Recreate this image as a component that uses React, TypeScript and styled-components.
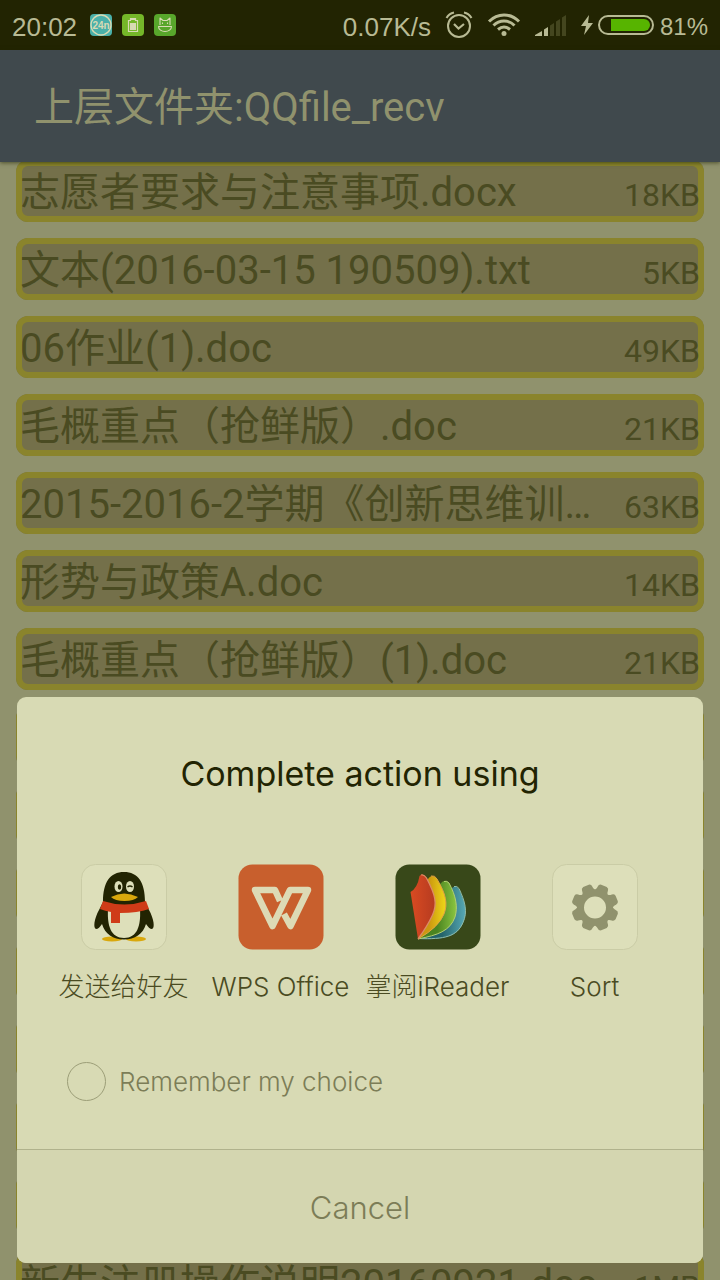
import React from "react";
import styled, { createGlobalStyle } from "styled-components";

const cjk = `"Noto Sans CJK SC", sans-serif`;
const ui = `Inter, ${cjk}`;

const GlobalStyle = createGlobalStyle`
  * { box-sizing: border-box; }
  body { margin: 0; background: #90926d; }
  button, input { font: inherit; margin: 0; }
`;

const Screen = styled.div`
  position: relative;
  display: flex;
  flex-direction: column;
  height: 100vh;
  overflow: hidden;
  background: #90926d;
  font-family: Roboto, ${cjk};
`;

const StatusBar = styled.div`
  display: flex;
  flex: none;
  align-items: center;
  justify-content: space-between;
  height: 50px;
  padding: 0 12px;
  background: #222402;
  color: #b8ba94;
  font-family: "Liberation Sans", sans-serif;
`;

const StatusGroup = styled.div<{ $gap: number }>`
  display: flex;
  align-items: center;
  gap: ${(p) => p.$gap}px;
  svg { display: block; flex: none; }
`;

const StatusText = styled.span<{ $size: number }>`
  font-size: ${(p) => p.$size}px;
  line-height: 32px;
  padding-top: 3px;
`;

const Header = styled.header`
  position: relative;
  z-index: 1;
  display: flex;
  flex: none;
  align-items: center;
  height: 112px;
  padding: 4px 34px 0;
  background: #40494d;
  box-shadow: 0 1px 4px rgba(34, 36, 2, 0.6);
`;

const HeaderTitle = styled.h1`
  margin: 0;
  color: #90926d;
  font-size: 40px;
  font-weight: 400;
  line-height: 56px;
`;

const FileList = styled.ul`
  display: flex;
  flex: 1;
  flex-direction: column;
  gap: 16px;
  margin: -2px 0 0;
  padding: 0 16px;
  list-style: none;
`;

const FileRow = styled.li`
  display: flex;
  flex: none;
  align-items: baseline;
  justify-content: space-between;
  gap: 16px;
  height: 62px;
  padding: 3px 4px 0;
  border-radius: 12px;
  background: #74704a;
  box-shadow: inset 0 0 0 6px #8a842c;
  color: #4a4b22;
  line-height: 60px;
  white-space: nowrap;
`;

const FileName = styled.span`
  min-width: 0;
  overflow: hidden;
  font-size: 40px;
  text-overflow: ellipsis;
`;

const FileSize = styled.span`
  font-size: 32px;
`;

const Sheet = styled.section`
  position: absolute;
  z-index: 2;
  right: 17px;
  bottom: 17px;
  left: 17px;
  overflow: hidden;
  border-radius: 9px;
  background: #d8dab4;
  font-family: ${ui};
`;

const SheetTitle = styled.h2`
  margin: 0;
  padding-top: 53px;
  color: #222402;
  font-size: 34px;
  font-weight: 400;
  line-height: 48px;
  text-align: center;
`;

const AppGrid = styled.div`
  display: grid;
  grid-template-columns: repeat(4, 1fr);
  padding: 66px 30px 0 28px;
`;

const AppButton = styled.button`
  display: flex;
  flex-direction: column;
  align-items: center;
  gap: 21px;
  padding: 0;
  border: 0;
  background: none;
  color: #4a4b22;
  font-size: 26px;
  font-weight: 300;
  line-height: 32px;
  white-space: nowrap;
  svg { display: block; }
`;

const Remember = styled.label`
  display: flex;
  align-items: center;
  gap: 13px;
  padding: 59px 50px 48px;
  color: #7c7d57;
  font-size: 26px;
  font-weight: 300;
  line-height: 39px;
`;

const RoundCheck = styled.input`
  appearance: none;
  width: 39px;
  height: 39px;
  border: 1px solid #9c9e78;
  border-radius: 50%;
  &:checked { background: #9c9e78; }
`;

const CancelButton = styled.button`
  display: block;
  width: 100%;
  padding: 33px 0 31px;
  border: 0;
  border-top: 1px solid #b0b28c;
  background: #d4d6b0;
  color: #7c7d57;
  font-size: 31px;
  font-weight: 300;
  line-height: 49px;
`;

const files = [
  { name: "志愿者要求与注意事项.docx", size: "18KB" },
  { name: "文本(2016-03-15 190509).txt", size: "5KB" },
  { name: "06作业(1).doc", size: "49KB" },
  { name: "毛概重点（抢鲜版）.doc", size: "21KB" },
  { name: "2015-2016-2学期《创新思维训…", size: "63KB" },
  { name: "形势与政策A.doc", size: "14KB" },
  { name: "毛概重点（抢鲜版）(1).doc", size: "21KB" },
  ...Array.from({ length: 7 }, () => ({ name: "", size: "" })),
  { name: "新生注册操作说明20160921.doc", size: "1MB" },
];

const CalendarBadge = () => (
  <svg width="24" height="24" viewBox="0 0 24 24">
    <rect x="1" y="1" width="22" height="22" rx="4" fill="#4ab0aa" />
    <circle cx="12" cy="12" r="10" fill="none" stroke="#d8dab4" strokeWidth="1.4" />
    <text x="12" y="15.5" textAnchor="middle" fontFamily="Liberation Sans" fontWeight="700" fontSize="10" fill="#d8dab4">24n</text>
  </svg>
);

const BatteryBadge = () => (
  <svg width="24" height="24" viewBox="0 0 24 24">
    <rect x="1" y="1" width="22" height="22" rx="4" fill="#75b729" />
    <path d="M9.5 5.5h5v2h2v11h-9v-11h2z" fill="none" stroke="#d8dab4" strokeWidth="1.2" />
    <path d="M9 10h6v7H9zM9 5h6v2H9z" fill="#d8dab4" />
  </svg>
);

const CatBadge = () => (
  <svg width="24" height="24" viewBox="0 0 24 24">
    <rect x="1" y="1" width="22" height="22" rx="4" fill="#58a62b" />
    <g fill="none" stroke="#d8dab4" strokeWidth="1.1" strokeLinejoin="round">
      <path d="M7 12V8.500L7 5l3 2.500h4L17 5v7" />
      <path d="M5.500 13.500h13c0 3-3 5-6.500 5s-6.500-2-6.500-5z" />
      <path d="M9.500 9.500v1.500M14.500 9.500v1.500" />
    </g>
  </svg>
);

const AlarmIcon = () => (
  <svg width="28" height="28" viewBox="0 0 28 28" fill="none" stroke="#b8ba94" strokeWidth="2">
    <circle cx="14" cy="15" r="11" />
    <path d="M9 13l4.500 4.500L19 13" strokeWidth="2.2" />
    <path d="M1.500 7Q4 2.500 9 1.500M26.500 7Q24 2.500 19 1.500" />
  </svg>
);

const WifiIcon = () => (
  <svg width="34" height="26" viewBox="0 0 34 26" fill="none" stroke="#b8ba94" strokeWidth="3">
    <path d="M2 9.500Q8.500 3 17 3t15 6.500" />
    <path d="M6.500 13.500Q11 9 17 9t10.500 4.500" />
    <path d="M11 17.500Q14 15 17 15t6 2.500" />
    <circle cx="17" cy="21.500" r="2.500" fill="#b8ba94" stroke="none" />
  </svg>
);

const SignalIcon = () => (
  <svg width="32" height="22" viewBox="0 0 32 22">
    <path d="M0 22v-1l7-4v5zM9 22v-6.500l4-2.500v9z" fill="#b8ba94" />
    <path d="M15 22V11.500l4-2.500v13zM21 22V7.500l4-2.500v17zM27 22V3.500L31 1v21z" fill="#44461f" />
  </svg>
);

const ChargeIcon = () => (
  <svg width="74" height="22" viewBox="0 0 74 22">
    <path d="M8 1L0 12h5l-2 9 9-12H7z" fill="#b8ba94" />
    <rect x="18" y="2" width="54" height="18" rx="9" fill="none" stroke="#b8ba94" strokeWidth="2" />
    <path d="M30 5h33a6 6 0 0 1 0 12H30z" fill="#57b400" />
  </svg>
);

const Tile = ({ fill, line = "none", children }: { fill: string; line?: string; children: React.ReactNode }) => (
  <svg width="86" height="86" viewBox="0 0 86 86" aria-hidden="true">
    <rect x=".5" y=".5" width="85" height="85" rx="14" fill={fill} stroke={line} />
    {children}
  </svg>
);

const QQIcon = () => (
  <Tile fill="#dddfba" line="#cacca6">
    <ellipse cx="31" cy="75" rx="10" ry="2.500" fill="#d9a80c" />
    <ellipse cx="55" cy="75" rx="10" ry="2.500" fill="#d9a80c" />
    <path d="M22 38C22 18 29 8 43 8s21 10 21 30l4 8c5 9 6 18 3 19-2 0-4-2-6-5-3 10-11 15.500-22 15.500S24 70 21 60c-2 3-4 5-6 5-3-1-2-10 3-19z" fill="#222402" />
    <path d="M27 45h32c1 17-3 29-16 29S26 62 27 45z" fill="#dddfba" />
    <ellipse cx="37.500" cy="22.500" rx="4" ry="5.500" fill="#dddfba" />
    <ellipse cx="49" cy="22.500" rx="4" ry="5.500" fill="#dddfba" />
    <ellipse cx="38.500" cy="23" rx="1.700" ry="2.800" fill="#222402" />
    <path d="M46.500 23q2.500-2 5 0" fill="none" stroke="#222402" strokeWidth="1.500" />
    <path d="M30 33q13-7 27 0-4 4-13.500 4T30 33z" fill="#d9a80c" />
    <path d="M22 37q21 7 43 0l3 8q-11 4-29 4v10h-9V48q-6-1-11-3z" fill="#cf3b18" />
  </Tile>
);

const WpsIcon = () => (
  <Tile fill="#c85f2d">
    <path d="M42 37l-5-11H17l17.500 36L52 26h18L52.500 62 46 50" fill="none" stroke="#dddab5" strokeWidth="6.500" strokeLinejoin="round" />
  </Tile>
);

const ReaderIcon = () => (
  <Tile fill="#384819">
    <defs>
      <linearGradient id="blue" x1="0" x2="1"><stop offset=".5" stopColor="#24636a" /><stop offset="1" stopColor="#57a9b5" /></linearGradient>
      <linearGradient id="green" x1="0" x2="1"><stop offset=".5" stopColor="#4b8420" /><stop offset="1" stopColor="#8bc641" /></linearGradient>
      <linearGradient id="gold" x1="0" x2="1"><stop offset=".4" stopColor="#cc9810" /><stop offset="1" stopColor="#eed818" /></linearGradient>
      <linearGradient id="red" x1="0" x2="1"><stop offset="0" stopColor="#d94b22" /><stop offset="1" stopColor="#b63b20" /></linearGradient>
    </defs>
    <path d="M56 25q4-5 8 0c6 13 9 23 4 34-6 14-18 17-45 16z" fill="url(#blue)" />
    <path d="M59 22.500q3-1 5 2c6 13 9 23 4 34-6 14-18 17-45 16" fill="none" stroke="#8fbba9" />
    <path d="M45 20q5-6 9-1c7 13 9 24 6 34-5 14-17 18-37 22z" fill="url(#green)" />
    <path d="M49 17.500q3-1 5 1.500c7 13 9 24 6 34-5 14-17 18-37 22" fill="none" stroke="#b4ce73" />
    <path d="M33 15q4-6 9 0c9 15 11 25 7 35Q44 63 23 75z" fill="url(#gold)" />
    <path d="M36 12q4-1 6 3c9 15 11 25 7 35Q44 63 23 75" fill="none" stroke="#e3a044" />
    <path d="M15.500 28q7-4 9-16 3-4 7 2c9 17 11 26 6 37q-5 11-14.500 24z" fill="url(#red)" />
    <path d="M26 11q3-1 5.500 3c9 17 11 26 6 37q-5 11-14.500 24" fill="none" stroke="#db8b66" strokeWidth="1.300" />
  </Tile>
);

const toothAngles = Array.from({ length: 8 }, (_, i) => 22.5 + i * 45);

const GearIcon = () => (
  <Tile fill="#dddfba" line="#cacca6">
    <g transform="translate(43 43.5)">
      {toothAngles.map((angle) => (
        <path key={angle} d="M-9-14Q-5.500-17-5.500-20.500-5.500-23-3-23.500H3Q5.500-23 5.500-20.500 5.500-17 9-14z" fill="#90926d" transform={`rotate(${angle})`} />
      ))}
      <circle r="14.500" fill="none" stroke="#90926d" strokeWidth="7" />
    </g>
  </Tile>
);

const apps = [
  { label: "发送给好友", Icon: QQIcon },
  { label: "WPS Office", Icon: WpsIcon },
  { label: "掌阅iReader", Icon: ReaderIcon },
  { label: "Sort", Icon: GearIcon },
];

export default function App() {
  return (
    <Screen>
      <GlobalStyle />
      <StatusBar>
        <StatusGroup $gap={12}>
          <StatusText $size={26}>20:02</StatusText>
          <StatusGroup $gap={8}>
            <CalendarBadge />
            <BatteryBadge />
            <CatBadge />
          </StatusGroup>
        </StatusGroup>
        <StatusGroup $gap={14}>
          <StatusText $size={26}>0.07K/s</StatusText>
          <AlarmIcon />
          <WifiIcon />
          <SignalIcon />
          <StatusGroup $gap={5}>
            <ChargeIcon />
            <StatusText $size={24}>81%</StatusText>
          </StatusGroup>
        </StatusGroup>
      </StatusBar>
      <Header>
        <HeaderTitle>上层文件夹:QQfile_recv</HeaderTitle>
      </Header>
      <FileList>
        {files.map((file, i) => (
          <FileRow key={i}>
            <FileName>{file.name}</FileName>
            <FileSize>{file.size}</FileSize>
          </FileRow>
        ))}
      </FileList>
      <Sheet role="dialog" aria-labelledby="sheet-title">
        <SheetTitle id="sheet-title">Complete action using</SheetTitle>
        <AppGrid>
          {apps.map(({ label, Icon }) => (
            <AppButton key={label} type="button">
              <Icon />
              <span>{label}</span>
            </AppButton>
          ))}
        </AppGrid>
        <Remember>
          <RoundCheck type="checkbox" />
          Remember my choice
        </Remember>
        <CancelButton type="button">Cancel</CancelButton>
      </Sheet>
    </Screen>
  );
}
